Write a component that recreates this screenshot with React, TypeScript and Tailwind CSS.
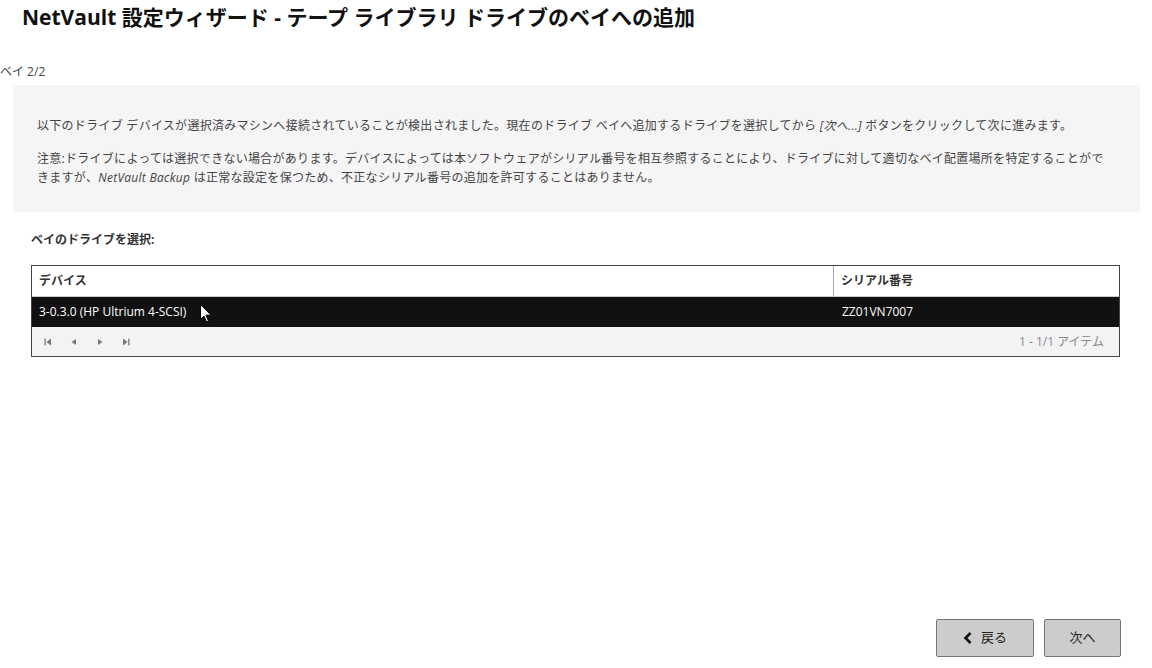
import React from "react";

const font = { fontFamily: '"Open Sans", "Noto Sans CJK JP", sans-serif' };

const PagerIcon = ({ kind }: { kind: "first" | "prev" | "next" | "last" }) => (
  <svg width="8" height="8" viewBox="0 0 8 8" className="text-[#777]" fill="currentColor">
    {kind === "first" && (
      <>
        <rect x="0.5" y="0.5" width="1.3" height="7" />
        <polygon points="7,0.5 7,7.5 2.5,4" />
      </>
    )}
    {kind === "prev" && <polygon points="6,1 6,7 1.5,4" />}
    {kind === "next" && <polygon points="2,1 2,7 6.5,4" />}
    {kind === "last" && (
      <>
        <polygon points="1,0.5 1,7.5 5.5,4" />
        <rect x="6.2" y="0.5" width="1.3" height="7" />
      </>
    )}
  </svg>
);

const Cursor = () => (
  <svg width="12" height="19" viewBox="0 0 12 19" className="absolute left-[168px] top-[7px]">
    <path d="M0.5 0.5 L0.5 15.5 L4 12 L6.5 18 L8.5 17 L6 11.2 L11 11.2 Z" fill="#fff" stroke="#000" strokeWidth="1" />
  </svg>
);

export default function App() {
  return (
    <div className="h-[668px] w-[1152px] bg-white flex flex-col text-[#333]" style={font}>
      <h1 className="pl-[22px] pt-[5px] text-[21px] leading-[25px] font-bold text-[#111]">
        NetVault 設定ウィザード - テープ ライブラリ ドライブのベイへの追加
      </h1>

      <div className="mt-[34px] text-[12px] leading-[16px] text-[#444]">ベイ 2/2</div>

      <div className="mt-[5px] ml-[13px] mr-[12px] bg-[#f5f5f5] pl-6 pr-[30px] pt-[31px] pb-[25px] text-[12px] leading-[19px] tracking-[0.28px] text-[#444]">
        <p>
          以下のドライブ デバイスが選択済みマシンへ接続されていることが検出されました。現在のドライブ ベイへ追加するドライブを選択してから <i>[次へ...]</i> ボタンをクリックして次に進みます。
        </p>
        <p className="mt-[14px]">
          注意:ドライブによっては選択できない場合があります。デバイスによっては本ソフトウェアがシリアル番号を相互参照することにより、ドライブに対して適切なベイ配置場所を特定することができますが、<i>NetVault Backup</i> は正常な設定を保つため、不正なシリアル番号の追加を許可することはありません。
        </p>
      </div>

      <div className="mt-[19px] ml-[31px] text-[12px] leading-[18px] font-bold text-[#333]">ベイのドライブを選択:</div>

      <div className="mt-[16px] ml-[31px] mr-[32px] border border-[#444] text-[12px]">
        <div className="flex h-[31px] bg-white border-b border-[#ccc] font-semibold text-[#333]">
          <div className="flex-1 flex items-center pl-[7px] border-r border-[#aaa]">デバイス</div>
          <div className="w-[285px] flex items-center pl-[7px]">シリアル番号</div>
        </div>
        <div className="relative flex h-[30px] bg-[#111] text-white">
          <div className="flex-1 flex items-center pl-[7px]">3-0.3.0 (HP Ultrium 4-SCSI)</div>
          <div className="w-[285px] flex items-center pl-[8px]">ZZ01VN7007</div>
          <Cursor />
        </div>
        <div className="flex items-center h-[29px] bg-[#f3f3f3] pl-[12px] pr-[15px]">
          <div className="flex items-center gap-[18px]">
            <PagerIcon kind="first" />
            <PagerIcon kind="prev" />
            <PagerIcon kind="next" />
            <PagerIcon kind="last" />
          </div>
          <div className="ml-auto text-[#888]">1 - 1/1 アイテム</div>
        </div>
      </div>

      <div className="mt-auto mb-[11px] mr-[31px] flex justify-end gap-[10px] text-[13px] text-[#222]">
        <button className="w-[98px] h-[38px] flex items-center justify-center gap-[8px] bg-[#cccccc] border border-[#777] rounded-[2px]">
          <svg width="10" height="12" viewBox="0 0 10 12">
            <path d="M7.5 1 L2.5 6 L7.5 11" fill="none" stroke="#111" strokeWidth="2.6" />
          </svg>
          <span>戻る</span>
        </button>
        <button className="w-[77px] h-[38px] flex items-center justify-center bg-[#cccccc] border border-[#777] rounded-[2px]">
          次へ
        </button>
      </div>
    </div>
  );
}
